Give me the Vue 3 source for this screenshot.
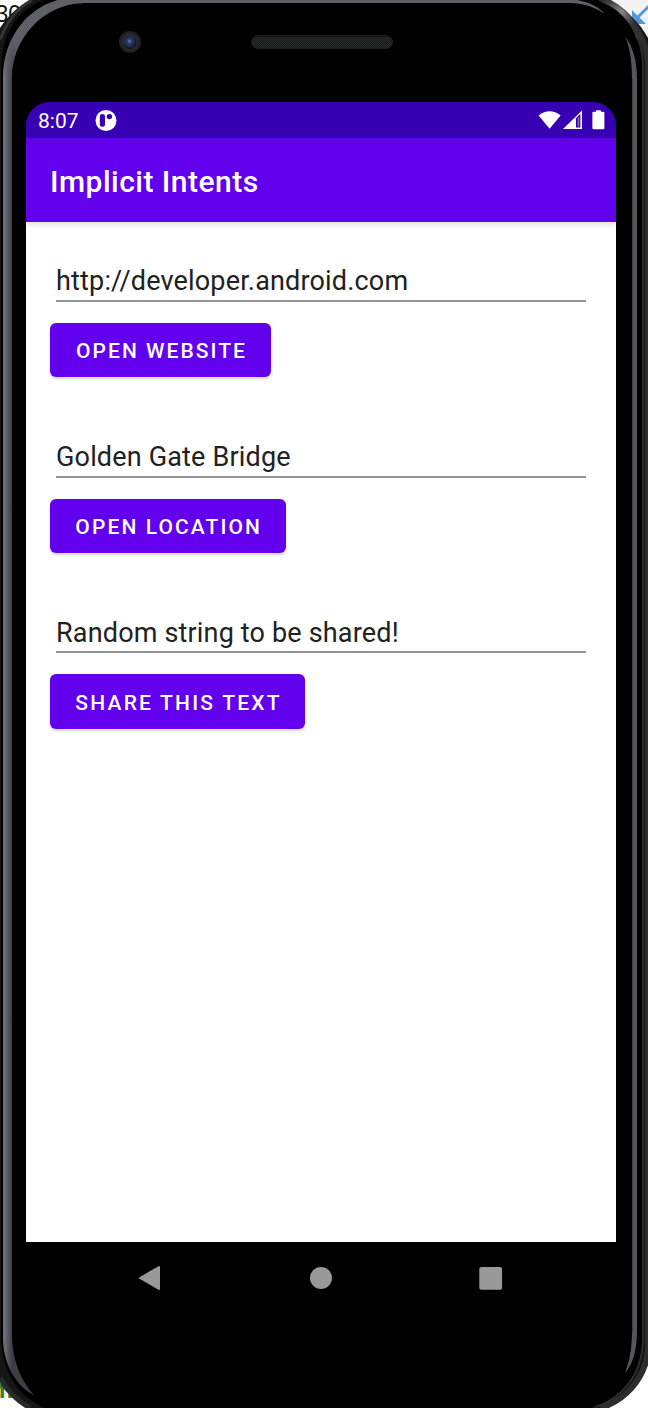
<script setup>
const entries = [
  { value: 'http://developer.android.com', action: 'Open Website', width: 221, tracking: 2.03 },
  { value: 'Golden Gate Bridge', action: 'Open Location', width: 235.5, tracking: 2.1 },
  { value: 'Random string to be shared!', action: 'Share This Text', width: 255, tracking: 2.2 },
]
</script>

<template>
  <main class="stage">
    <svg class="device" viewBox="0 0 648 1408" aria-hidden="true">
      <defs>
        <linearGradient id="rail" x1="3" x2="12" y1="0" y2="0" gradientUnits="userSpaceOnUse">
          <stop offset="0" stop-color="#73757a" />
          <stop offset=".3" stop-color="#65686d" />
          <stop offset=".7" stop-color="#4c4f55" />
          <stop offset="1" stop-color="#3c3e43" />
        </linearGradient>
        <linearGradient id="corner" x1="0" x2="0" y1="80" y2="0" gradientUnits="userSpaceOnUse">
          <stop offset="0" stop-color="#5d6066" stop-opacity="0" />
          <stop offset=".5" stop-color="#5d6066" />
          <stop offset="1" stop-color="#5d6066" />
        </linearGradient>
        <linearGradient id="edge" x1="600" x2="642" y1="0" y2="50" gradientUnits="userSpaceOnUse">
          <stop offset="0" stop-color="#222" />
          <stop offset=".35" stop-color="#858585" />
          <stop offset=".6" stop-color="#333" />
          <stop offset="1" stop-color="#353535" />
        </linearGradient>
        <radialGradient id="lens" cx=".45" cy=".4" r=".6">
          <stop offset="0" stop-color="#7184b0" />
          <stop offset=".25" stop-color="#303e70" />
          <stop offset=".7" stop-color="#1b2548" />
          <stop offset="1" stop-color="#0b0e18" />
        </radialGradient>
        <pattern id="mesh" width="2" height="2" patternUnits="userSpaceOnUse">
          <rect width="2" height="2" fill="#1a1c1b" />
          <path d="M0 0h1v1H0zM1 1h1v1H1z" fill="#292b2a" />
        </pattern>
      </defs>
      <rect width="648" height="1408" fill="#fff" />
      <path d="M600 0h48v44h-48z" fill="#f2f2f2" />
      <text x="-4.5" y="22" class="behind">30</text>
      <text x="-9" y="1398" class="behind-green">m</text>
      <path d="M650 5L637 18" fill="none" stroke="#519bd5" stroke-width="3" />
      <path d="M632 10L646 24H632Z" fill="#519bd5" />
      <path d="M30 0H607C625 8 640 23 648 38V1365C640 1382 625 1398 605 1408H27C15 1400 6 1390 0 1380V28C7 17 17 7 30 0Z" fill="#151515" />
      <path d="M32 0C18 8 7 20 0 40" fill="none" stroke="#343434" stroke-width="3" />
      <path d="M0 1378C8 1393 18 1401 30 1408" fill="none" stroke="#292929" stroke-width="5" />
      <path d="M604 0C627 10 646 34 648 64V1350C645 1380 624 1401 600 1408" fill="none" stroke="#2d2d2d" stroke-width="6" />
      <path d="M44 0H598C622 6 642 31 642 66V1338C642 1374 621 1399 590 1408H45C20 1398 1 1373 1 1335V70C1 33 18 9 44 0Z" fill="#000" />
      <path d="M599 0C624 7 643 34 643 68V1338C643 1374 622 1399 595 1407" fill="none" stroke="#303030" stroke-width="1.5" />
      <path d="M602 0C618 5 633 19 639 39" fill="none" stroke="url(#edge)" stroke-width="5" />
      <path d="M3 78C3 44 22 10 58 0H84V3C43 4 12 38 12 78V1338C13 1360 20 1380 34 1395C15 1386 3 1362 3 1338Z" fill="url(#rail)" />
      <path d="M3 78C3 44 22 10 58 0H577C589 2 599 7 605 14C596 8 585 3 570 3H84C43 4 12 38 12 78Z" fill="url(#corner)" />
      <path d="M625 36C633 47 637 61 637 79V1330C637 1350 633 1364 625 1373C630 1360 632 1347 632 1330V79C632 61 630 48 625 36Z" fill="#55555b" />
      <path d="M632.5 78V1333" stroke="#3d3d42" stroke-width="1" />

      <circle cx="130" cy="42" r="11" fill="#202020" />
      <circle cx="130" cy="42" r="8.5" fill="#292a2b" />
      <circle cx="130" cy="42.5" r="6.5" fill="url(#lens)" />
      <rect x="251.5" y="35.5" width="141" height="13" rx="6.5" fill="#111312" stroke="#1f2120" />
      <rect x="252" y="37" width="140" height="11" rx="5.5" fill="url(#mesh)" />
    </svg>

    <section class="screen">
      <header class="status">
        <span class="time">8:07</span>
        <svg class="notification" width="22" height="22" viewBox="0 0 22 22">
          <circle cx="11" cy="10.5" r="10.5" fill="#fff" />
          <rect x="4.8" y="4" width="5.2" height="12.7" rx="2.5" fill="#3700b3" />
          <circle cx="14.4" cy="6.6" r="2.7" fill="#3700b3" />
        </svg>
        <svg class="indicators" width="68" height="22" viewBox="0 0 68 22">
          <path d="M.6 5.5Q11.6-2.8 22.6 5.5L11.6 18.7Z" fill="#fff" />
          <path d="M44 .5V19H25Z" fill="#fff" />
          <path d="M38 8.2L42.4 3.8V17.5H38Z" fill="#3700b3" />
          <path d="M39.7 8L41.2 6.5V16.4H39.7Z" fill="#8b68d2" />
          <path d="M58 1.7V1Q58 .3 58.7 .3H62.3Q63 .3 63 1V1.7H65.3Q66.4 1.7 66.4 2.8V18Q66.4 19.2 65.3 19.2H55.6Q54.4 19.2 54.4 18V2.8Q54.4 1.7 55.6 1.7Z" fill="#fff" />
        </svg>
      </header>
      <div class="toolbar"><h1>Implicit Intents</h1></div>
      <div class="content">
        <div v-for="entry in entries" :key="entry.action" class="entry">
          <div class="field">{{ entry.value }}</div>
          <button :style="{ width: entry.width + 'px', letterSpacing: entry.tracking + 'px' }">{{ entry.action }}</button>
        </div>
      </div>
    </section>

    <nav class="navigation">
      <svg width="24" height="26" viewBox="0 0 24 26">
        <path d="M22 2V24L3 13Z" fill="#999" stroke="#999" stroke-width="2" stroke-linejoin="round" />
      </svg>
      <svg width="24" height="26" viewBox="0 0 24 26"><circle cx="13" cy="13" r="11" fill="#999" /></svg>
      <svg width="24" height="26" viewBox="0 0 24 26"><rect x=".3" y="2" width="22.8" height="22.7" rx="2" fill="#999" /></svg>
    </nav>
  </main>
</template>

<style scoped>
.stage {
  position: relative;
  width: 648px;
  height: 1408px;
  box-sizing: border-box;
  padding: 102px 32px 0 26px;
  overflow: hidden;
  font-family: Roboto, sans-serif;
}
.device {
  position: absolute;
  inset: 0;
  width: 648px;
  height: 1408px;
}
.behind { font: 23px "Liberation Sans", sans-serif; fill: #111; }
.behind-green { font: bold 25px "Liberation Sans", sans-serif; fill: #2d8519; }
.screen {
  position: relative;
  width: 590px;
  height: 1140px;
  overflow: hidden;
  border-radius: 24px 24px 0 0;
  background: linear-gradient(#3700b3 60px, #fff 60px);
}
.status {
  display: flex;
  align-items: center;
  box-sizing: border-box;
  height: 36px;
  padding: 0 10px 0 12px;
  background: #3700b3;
  color: #fff;
}
.time {
  width: 57px;
  font-size: 21px;
  line-height: 36px;
  padding-top: 2px;
}
.notification { margin-top: 1px; }
.indicators { margin-left: auto; margin-top: 2px; }
.toolbar {
  position: relative;
  display: flex;
  align-items: center;
  height: 84px;
  padding-left: 24px;
  background: #6200ee;
  box-shadow: 0 3px 5px rgba(0, 0, 0, .11);
  clip-path: inset(0 0 -12px 0);
}
h1 {
  margin: 3px 0 0;
  color: #fff;
  font-size: 30px;
  line-height: 36px;
  font-weight: 500;
  letter-spacing: .48px;
}
.content {
  display: flex;
  flex-direction: column;
  gap: 49px;
  padding: 36px 24px;
}
.entry { height: 126.8px; }
.field {
  box-sizing: border-box;
  height: 43.8px;
  margin: 0 6px 21px;
  border-bottom: 2px solid #949494;
  color: #212121;
  font-size: 27px;
  line-height: 46px;
  letter-spacing: .17px;
  white-space: nowrap;
}
button {
  display: block;
  height: 54.5px;
  padding: 2px 0 0 2px;
  border: 0;
  border-radius: 6px;
  background: #6200ee;
  box-shadow: 0 2px 3px rgba(0, 0, 0, .17);
  color: #fff;
  font: 500 21px/52px Roboto, sans-serif;
  text-transform: uppercase;
  white-space: nowrap;
}
.navigation {
  position: relative;
  display: flex;
  justify-content: space-between;
  width: 366px;
  margin: 23px auto 0 111px;
}
</style>

<style>
body { margin: 0; }
</style>
